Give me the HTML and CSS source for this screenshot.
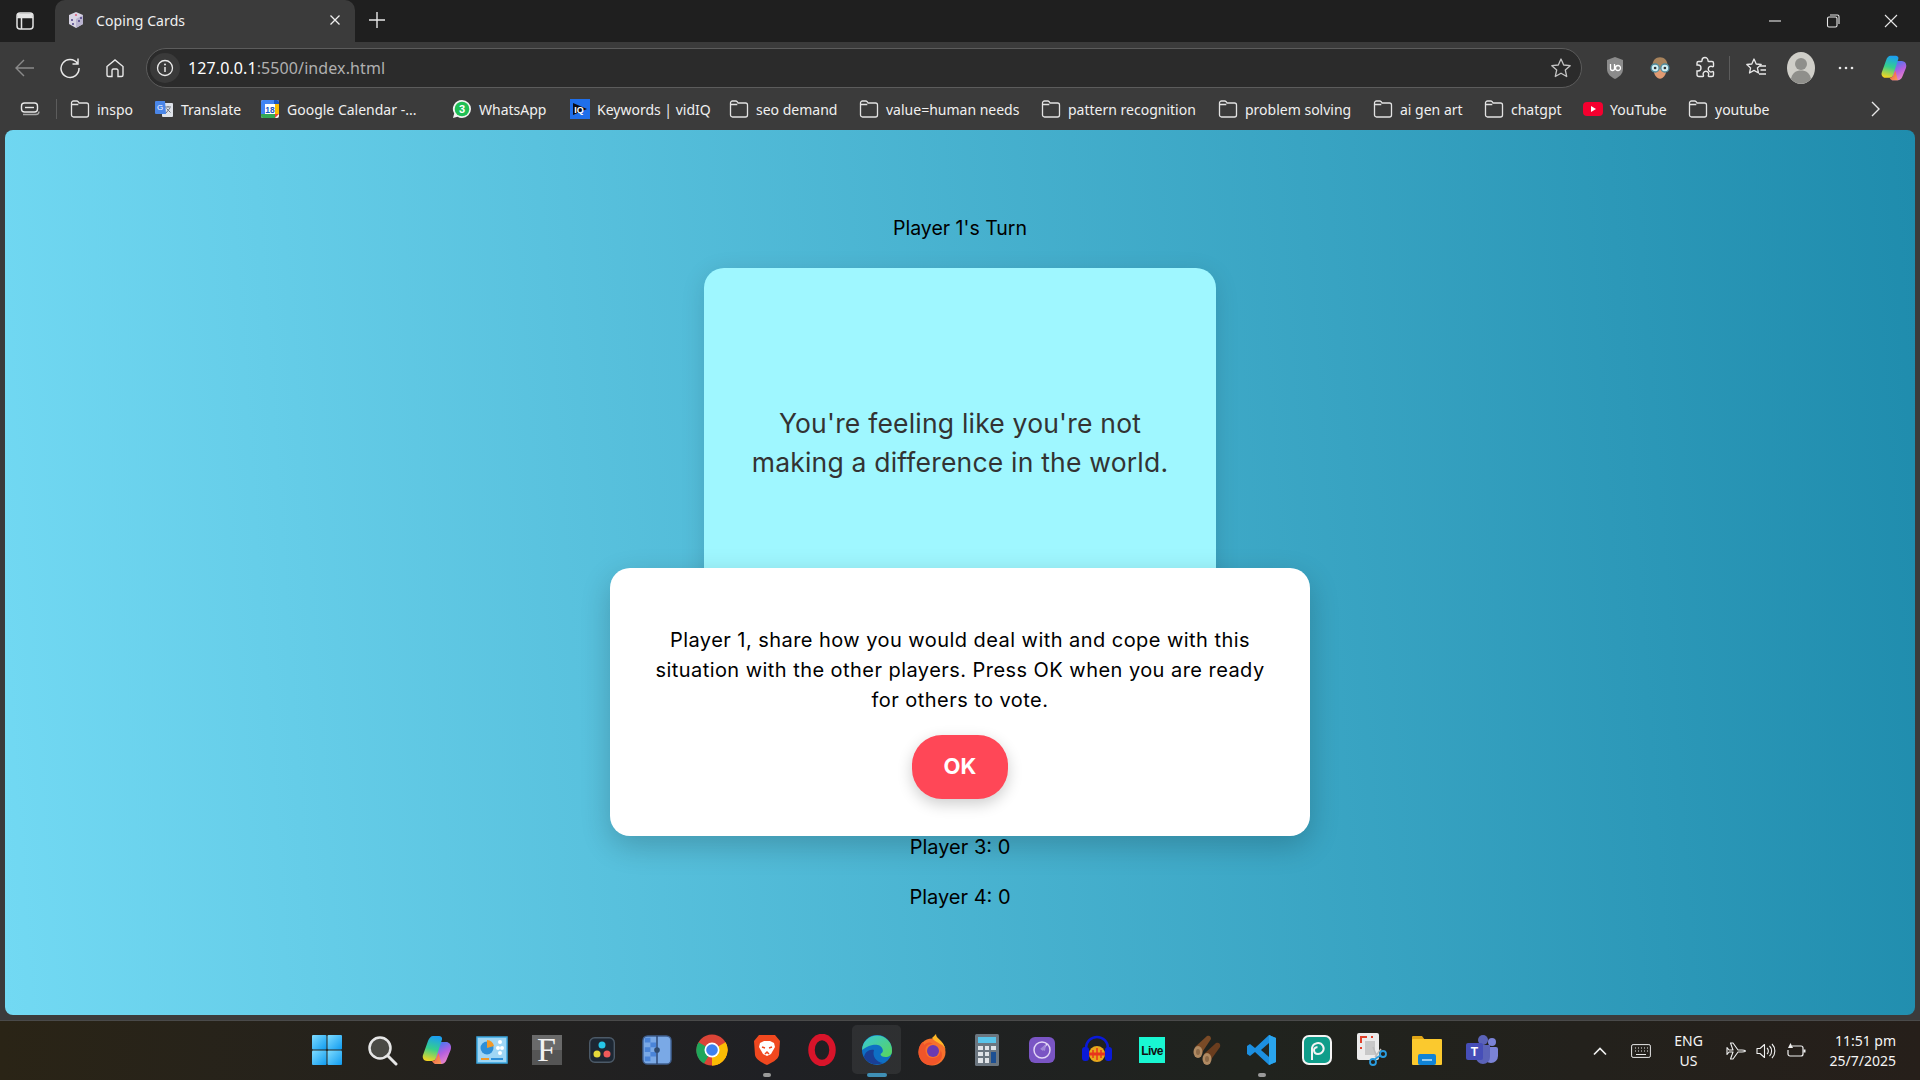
FILE: index.html
```html
<!DOCTYPE html>
<html lang="en">
<head>
  <meta charset="UTF-8">
  <title>Coping Cards</title>
  <link rel="stylesheet" href="styles.css">
</head>
<body>
  <svg class="defs" width="0" height="0">
    <symbol id="folder" viewBox="0 0 20 20">
      <path d="M1.500 4a2 2 0 0 1 2-2h3.200c.6 0 1.100.3 1.500.7l.9 1.300h7.400a2 2 0 0 1 2 2v10a2 2 0 0 1-2 2h-13a2 2 0 0 1-2-2z M1.500 5.500h6.800" fill="none" stroke="#e2e2e2" stroke-width="1.300"/>
    </symbol>
  </svg>

  <div class="tabbar">
    <svg class="tabs-btn" width="18" height="18" viewBox="0 0 18 18"><rect x="1" y="1" width="16" height="16" rx="3" fill="none" stroke="#e4e4e4" stroke-width="1.500"/><path d="M1 5.500h16M5.500 5.500V17" stroke="#e4e4e4" stroke-width="1.500" fill="none"/><rect x="1.500" y="1.500" width="15" height="3.500" fill="#e4e4e4"/></svg>
    <div class="tab">
      <svg width="18" height="18" viewBox="0 0 18 18"><path d="M9 1l7 3v9l-7 4-7-4V4z" fill="#d8d4e4"/><path d="M9 8l7-4v9l-7 4z" fill="#b9b3cf"/><circle cx="9" cy="4" r="1.100" fill="#e0607a"/><circle cx="5" cy="9" r="1" fill="#4d3f86"/><circle cx="6" cy="13" r="1" fill="#4d3f86"/><circle cx="12" cy="10" r="1" fill="#4d3f86"/><circle cx="14" cy="7" r="1" fill="#4d3f86"/></svg>
      <span class="tab-title">Coping Cards</span>
      <svg class="tab-close" width="12" height="12" viewBox="0 0 12 12"><path d="M1.500 1.500l9 9M10.500 1.500l-9 9" stroke="#f0f0f0" stroke-width="1.300"/></svg>
    </div>
    <svg class="tab-new" width="18" height="18" viewBox="0 0 18 18"><path d="M9 1v16M1 9h16" stroke="#e8e8e8" stroke-width="1.400"/></svg>
    <div class="win-btns">
      <svg width="14" height="14" viewBox="0 0 14 14"><path d="M1 7h12" stroke="#e8e8e8" stroke-width="1.100"/></svg>
      <svg width="14" height="14" viewBox="0 0 14 14"><rect x="1.500" y="3" width="9.500" height="10" rx="1.500" fill="none" stroke="#e8e8e8" stroke-width="1.100"/><path d="M4 1h7.500A1.500 1.500 0 0 1 13 2.500V10" fill="none" stroke="#e8e8e8" stroke-width="1.100"/></svg>
      <svg width="14" height="14" viewBox="0 0 14 14"><path d="M1 1l12 12M13 1L1 13" stroke="#e8e8e8" stroke-width="1.100"/></svg>
    </div>
  </div>

  <div class="toolbar">
    <div class="nav-btns">
      <svg width="22" height="22" viewBox="0 0 22 22"><path d="M20 11H2M10 3l-8 8 8 8" fill="none" stroke="#8a8a8a" stroke-width="1.400"/></svg>
      <svg width="22" height="22" viewBox="0 0 22 22"><path d="M18.500 6.500A9 9 0 1 0 20 11M19 1.500v5.500h-5.500" fill="none" stroke="#e8e8e8" stroke-width="1.500"/></svg>
      <svg width="22" height="22" viewBox="0 0 22 22"><path d="M3 9.500L11 3l8 6.500V18a1.500 1.500 0 0 1-1.500 1.500H14V13.500a1.500 1.500 0 0 0-1.500-1.500h-3A1.500 1.500 0 0 0 8 13.500v6H4.500A1.500 1.500 0 0 1 3 18z" fill="none" stroke="#e8e8e8" stroke-width="1.400"/></svg>
    </div>
    <div class="address">
      <span class="info-badge">
        <svg width="18" height="18" viewBox="0 0 18 18"><circle cx="9" cy="9" r="7.500" fill="none" stroke="#e8e8e8" stroke-width="1.300"/><path d="M9 8v5" stroke="#e8e8e8" stroke-width="1.500"/><circle cx="9" cy="5.500" r="1" fill="#e8e8e8"/></svg>
      </span>
      <span class="url"><span class="url-host">127.0.0.1</span>:5500/index.html</span>
      <svg class="star" width="22" height="22" viewBox="0 0 22 22"><path d="M11 2l2.700 6 6.500.7-4.900 4.300 1.400 6.500L11 16.200 5.300 19.500l1.400-6.500L1.800 8.700 8.300 8z" fill="none" stroke="#c4c4c4" stroke-width="1.300" stroke-linejoin="round"/></svg>
    </div>
    <div class="ext-btns">
      <svg class="ext" width="20" height="24" viewBox="0 0 20 24"><path d="M10 1l8 3v9c0 5-4 8-8 10-4-2-8-5-8-10V4z" fill="#8b8b8b"/><path d="M5.500 8v4.500a2 2 0 0 0 4 0V8M10.500 12a2.500 2.500 0 1 0 5 0 2.500 2.500 0 1 0-5 0" fill="none" stroke="#fff" stroke-width="1.300"/></svg>
      <svg class="ext" width="24" height="26" viewBox="0 0 22 24"><path d="M4 10c0-5 3-8 7-8s7 3 7 8v3H4z" fill="#a8835c"/><path d="M5 13c0 5 3 9 6 9s6-4 6-9z" fill="#e09a72"/><circle cx="6.500" cy="12" r="3.700" fill="#cfeef2" stroke="#4d8a9c" stroke-width="1.200"/><circle cx="15.500" cy="12" r="3.700" fill="#cfeef2" stroke="#4d8a9c" stroke-width="1.200"/><circle cx="6.500" cy="12" r="1.200" fill="#333"/><circle cx="15.500" cy="12" r="1.200" fill="#333"/></svg>
      <svg class="ext" width="22" height="24" viewBox="0 0 22 24"><path d="M8 4.500a3 3 0 0 1 6 0c0 .5 0 1 .5 1H18a1.500 1.500 0 0 1 1.500 1.500v3c0 .6-.6.8-1.200.6a2.800 2.800 0 1 0 0 5c.6-.2 1.200 0 1.200.6V19a1.500 1.500 0 0 1-1.500 1.500h-3c-.6 0-.8-.6-.6-1.200a2.800 2.800 0 1 0-5 0c.2.600 0 1.200-.6 1.200H5a2 2 0 0 1-2-2v-3.500h1a3 3 0 0 0 0-6H3V7a1.500 1.500 0 0 1 1.500-1.500h3C8 5.500 8 5 8 4.500z" fill="none" stroke="#e8e8e8" stroke-width="1.400"/></svg>
      <span class="ext-sep"></span>
      <svg class="ext" width="22" height="22" viewBox="0 0 22 22"><path d="M9 2l2.200 5 5 .5-3.800 3.400 1.100 5.100L9 13.400 4.500 16l1.100-5.100L1.800 7.500l5-.5z" fill="none" stroke="#e8e8e8" stroke-width="1.300" stroke-linejoin="round"/><path d="M15 9h6M15.500 13h5.500M14 17h7" stroke="#e8e8e8" stroke-width="1.300"/></svg>
      <svg class="ext" width="28" height="32" viewBox="0 0 28 32"><ellipse cx="14" cy="16" rx="14" ry="16" fill="#cfcec8"/><circle cx="14" cy="12" r="6" fill="#8f8f8b"/><path d="M4 27c1-6 5-8.500 10-8.500s9 2.500 10 8.500a14 16 0 0 1-20 0z" fill="#8f8f8b"/></svg>
      <svg class="ext" width="18" height="6" viewBox="0 0 18 6"><circle cx="3" cy="3" r="1.300" fill="#e8e8e8"/><circle cx="9" cy="3" r="1.300" fill="#e8e8e8"/><circle cx="15" cy="3" r="1.300" fill="#e8e8e8"/></svg>
      <svg class="ext" width="28" height="32" viewBox="0 0 32 32"><use href="#copilot-mark"/></svg>
    </div>
  </div>

  <div class="bookmarks">
    <svg class="bm-pill" width="20" height="16" viewBox="0 0 20 16"><rect x="1.500" y="2" width="16" height="9" rx="3" fill="none" stroke="#e8e8e8" stroke-width="1.400"/><path d="M5 6.500h9" stroke="#e8e8e8" stroke-width="1.400"/><path d="M3 13.500h13a3 3 0 0 0 3-3" fill="none" stroke="#a8a8a8" stroke-width="1.300"/></svg>
    <span class="bm-sep"></span>
    <span class="bm"><svg width="20" height="20"><use href="#folder"/></svg>inspo</span>
    <span class="bm"><svg width="20" height="20" viewBox="0 0 20 20"><rect x="8" y="4" width="11" height="14" rx="1" fill="#dfe3ea"/><path d="M11 8h6M14 7v1M12 14l4-5M12.500 9.500l4 4" stroke="#6c7480" stroke-width="1"/><path d="M2 2h9l1 13H2a1 1 0 0 1-1-1V3a1 1 0 0 1 1-1z" fill="#4a86e8"/><text class="icon-text" x="6" y="11" font-size="8" fill="#fff" text-anchor="middle">G</text></svg>Translate</span>
    <span class="bm"><svg width="20" height="20" viewBox="0 0 20 20"><rect x="1" y="1" width="18" height="18" rx="2" fill="#fff"/><path d="M1 5V3a2 2 0 0 1 2-2h11v4z" fill="#4285f4"/><path d="M14 1h3a2 2 0 0 1 2 2v2h-5z" fill="#1a56c4"/><path d="M1 5h4v10H1z" fill="#4285f4"/><path d="M15 5h4v10h-4z" fill="#fbbc04"/><path d="M1 15h14v4H3a2 2 0 0 1-2-2z" fill="#34a853"/><path d="M15 15h4l-4 4z" fill="#ea4335"/><text class="icon-text" x="10" y="13.500" font-size="8.500" font-weight="700" fill="#1a56c4" text-anchor="middle">18</text></svg>Google Calendar -...</span>
    <span class="bm"><svg width="20" height="20" viewBox="0 0 20 20"><path d="M10 1a9 9 0 0 1 0 18 9 9 0 0 1-4.500-1.200L1 19l1.200-4.400A9 9 0 0 1 10 1z" fill="#f2f2f2"/><circle cx="10" cy="10" r="7.300" fill="#1fbf55"/><text class="icon-text" x="10" y="14" font-size="11" font-weight="700" fill="#fff" text-anchor="middle">3</text></svg>WhatsApp</span>
    <span class="bm"><svg width="20" height="20" viewBox="0 0 20 20"><rect width="20" height="20" fill="#1f6feb"/><path d="M3 4l14 6-14 6z" fill="#0b0b14"/><text class="icon-text" x="9" y="13.500" font-size="9" font-weight="700" fill="#fff" text-anchor="middle">IQ</text></svg>Keywords | vidIQ</span>
    <span class="bm"><svg width="20" height="20"><use href="#folder"/></svg>seo demand</span>
    <span class="bm"><svg width="20" height="20"><use href="#folder"/></svg>value=human needs</span>
    <span class="bm"><svg width="20" height="20"><use href="#folder"/></svg>pattern recognition</span>
    <span class="bm"><svg width="20" height="20"><use href="#folder"/></svg>problem solving</span>
    <span class="bm"><svg width="20" height="20"><use href="#folder"/></svg>ai gen art</span>
    <span class="bm"><svg width="20" height="20"><use href="#folder"/></svg>chatgpt</span>
    <span class="bm"><svg width="20" height="20" viewBox="0 0 20 20"><rect y="3" width="20" height="14" rx="4" fill="#f5002f"/><path d="M8 7l5 3-5 3z" fill="#fff"/></svg>YouTube</span>
    <span class="bm"><svg width="20" height="20"><use href="#folder"/></svg>youtube</span>
    <svg class="bm-more" width="12" height="18" viewBox="0 0 12 18"><path d="M3 2l7 7-7 7" fill="none" stroke="#e8e8e8" stroke-width="1.400"/></svg>
  </div>

  <main class="page">
    <h2 class="turn">Player 1's Turn</h2>
    <div class="card">
      <p>You're feeling like you're not making a difference in the world.</p>
    </div>
    <div class="scores">
      <p>Player 3: 0</p>
      <p>Player 4: 0</p>
    </div>

    <div class="modal">
      <p>Player 1, share how you would deal with and cope with this situation with the other players. Press OK when you are ready for others to vote.</p>
      <button class="ok-btn" type="button">OK</button>
    </div>
  </main>

  <div class="taskbar">
    <div class="tb-icons">
      <span class="tb-slot"><svg width="32" height="32" viewBox="0 0 32 32"><defs><linearGradient id="win" x1="0" y1="0" x2="1" y2="1"><stop offset="0" stop-color="#7fdcff"/><stop offset="1" stop-color="#0f9bf0"/></linearGradient></defs><rect x="1" y="1" width="14.500" height="14.500" rx="1" fill="url(#win)"/><rect x="16.500" y="1" width="14.500" height="14.500" rx="1" fill="url(#win)"/><rect x="1" y="16.500" width="14.500" height="14.500" rx="1" fill="url(#win)"/><rect x="16.500" y="16.500" width="14.500" height="14.500" rx="1" fill="url(#win)"/></svg></span>
      <span class="tb-slot"><svg width="32" height="32" viewBox="0 0 32 32"><circle cx="14" cy="14" r="10.500" fill="#4a4a45" stroke="#e6e6e6" stroke-width="2.500"/><path d="M22 22l8 8" stroke="#e6e6e6" stroke-width="3" stroke-linecap="round"/></svg></span>
      <span class="tb-slot"><svg width="32" height="32" viewBox="0 0 32 32"><symbol id="copilot-mark" viewBox="0 0 32 32"><defs><linearGradient id="cpA" x1="0.500" y1="0" x2="0.300" y2="1"><stop offset="0" stop-color="#1c9ff0"/><stop offset=".5" stop-color="#35cf8c"/><stop offset="1" stop-color="#f6d520"/></linearGradient><linearGradient id="cpB" x1="0.300" y1="0" x2="0.700" y2="1"><stop offset="0" stop-color="#3f7bf0"/><stop offset=".5" stop-color="#b45fe0"/><stop offset="1" stop-color="#f28ac4"/></linearGradient><linearGradient id="cpC" x1="0" y1="0" x2="1" y2="1"><stop offset="0" stop-color="#f5543a"/><stop offset="1" stop-color="#f5a05a"/></linearGradient></defs><path d="M17 8h8c3 0 5 2.500 5 5 0 1 0 2-.4 3l-4.100 10c-1 2.500-3 4-5 4h-7z" fill="url(#cpB)"/><path d="M12 2h6c2 0 3.500 1.500 3 3.500L15 24c-.6 2-2 3-4 3H6c-3 0-5-3-4-6l5-14c1-3 3-5 5-5z" fill="url(#cpA)"/><path d="M11 27c2 0 4-1 4.500-3l2-5c1 3 2 8 3 11h-5c-2 0-3.500-1-4.500-3z" fill="url(#cpC)"/></symbol><use href="#copilot-mark"/></svg></span>
      <span class="tb-slot"><svg width="32" height="32" viewBox="0 0 32 32"><rect x="1" y="3" width="30" height="26" fill="#9fd6f5" stroke="#3aa7e0" stroke-width="1.500"/><circle cx="11" cy="14" r="6.500" fill="#2d8fd8"/><path d="M11 14V6a8 8 0 0 1 7 6z" fill="#f09a2a"/><circle cx="24" cy="8" r="2" fill="#fff"/><circle cx="22" cy="14" r="2" fill="#fff"/><circle cx="26" cy="14" r="2" fill="#fff"/><circle cx="24" cy="19" r="2" fill="#fff"/><path d="M5 25h8" stroke="#f09a2a" stroke-width="2"/><path d="M15 25h12" stroke="#2d8fd8" stroke-width="2"/></svg></span>
      <span class="tb-slot"><span class="logo-f">F</span></span>
      <span class="tb-slot"><svg width="26" height="26" viewBox="0 0 26 26"><rect x=".7" y=".7" width="24.600" height="24.600" rx="5" fill="#1d2733" stroke="#4c5a68" stroke-width="1.400"/><circle cx="13" cy="8" r="3.500" fill="#25c6e8"/><circle cx="8" cy="17" r="3.500" fill="#e5d93a"/><circle cx="18" cy="17" r="3.500" fill="#ef5a5a"/></svg></span>
      <span class="tb-slot"><svg width="30" height="30" viewBox="0 0 32 32"><rect x="1" y="1" width="30" height="30" rx="5" fill="#7aa9e6" stroke="#3f5f8f" stroke-width="1.500"/><path d="M3 3h6v5H3zM9 8h6v5H9zM3 13h6v5H3zM9 18h6v5H9zM3 23h6v5H3z" fill="#4a84d8"/><path d="M16 1v30" stroke="#2c4570" stroke-width="1.500"/><circle cx="16" cy="16" r="3" fill="#2f4a6e"/></svg></span>
      <span class="tb-slot"><svg width="32" height="32" viewBox="0 0 32 32"><circle cx="16" cy="16" r="15.500" fill="#db4437"/><path d="M16 16L29.500 8.300A15.500 15.500 0 0 1 16 31.500z" fill="#fbbc04"/><path d="M16 16l-8 13.600A15.500 15.500 0 0 1 2.500 8.200z" fill="#1fa65a"/><path d="M16 31.500l7.500-13L29.500 8.300A15.500 15.500 0 0 1 16 31.500z" fill="#fbbc04"/><circle cx="16" cy="16" r="7.500" fill="#fff"/><circle cx="16" cy="16" r="5.800" fill="#3f80ee"/></svg></span>
      <span class="tb-slot tb-slot-open"><svg width="28" height="32" viewBox="0 0 28 32"><path d="M6 1h16l5 6-1 14c-1 5-8 8-12 10C10 29 3 26 2 21L1 7z" fill="#f0481f"/><path d="M7 9l4-2h6l4 2 1 4-4 7-4 2-4-2-4-7z" fill="#fff"/><path d="M9 13l3 1M19 13l-3 1M12 20l2-2 2 2" stroke="#f0481f" stroke-width="1.500" fill="none"/></svg></span>
      <span class="tb-slot"><svg width="32" height="32" viewBox="0 0 32 32"><ellipse cx="16" cy="16" rx="10.500" ry="13" fill="none" stroke="#d8142a" stroke-width="6.500"/></svg></span>
      <span class="tb-slot tb-slot-active"><svg width="32" height="34" viewBox="0 0 32 32"><defs><linearGradient id="edgeA" x1="0" y1="0" x2="1" y2="1"><stop offset="0" stop-color="#36c7d8"/><stop offset="1" stop-color="#5ad55a"/></linearGradient></defs><circle cx="16" cy="16" r="15" fill="#0e6fc4"/><path d="M1 16A15 15 0 0 1 31 17c0 4-3 6-6.500 6-3 0-5-1-5-3 2-1 3-3 2-5-1-4-6-5-10-4-5 1-9 4-10.500 5z" fill="url(#edgeA)"/><path d="M13 16c-2 6 2 12 9 13-7 3-15 1-19-6 1-5 5-8 10-7z" fill="#1a3f95"/></svg></span>
      <span class="tb-slot"><svg width="30" height="32" viewBox="0 0 30 32"><circle cx="15" cy="18" r="13.500" fill="#f7712c"/><path d="M15 4c2-2 3-3 4-4 0 3 2 4 5 7 3 3 5 8 5 11 0-4-3-7-6-8-2-2-6-3-8-6z" fill="#ffb627"/><path d="M1.500 18c0-5 2-8 4-10l2 3c3-3 5-3 8-1-4 0-7 2-7 6 0 5 3 8 7 8 5 0 8-3 8-8 2 3 2 7 0 10-3 4-7 5-10 5C6 31 1.500 25 1.500 18z" fill="#f0552a"/><circle cx="16" cy="17" r="6" fill="#6a3ab0"/></svg></span>
      <span class="tb-slot"><svg width="24" height="32" viewBox="0 0 24 32"><rect width="24" height="32" rx="1.500" fill="#6b7680"/><rect x="3" y="3" width="18" height="6" fill="#58c4ea"/><path d="M3 12h5v4H3zM10 12h4v4h-4zM3 18h5v4H3zM10 18h4v4h-4zM3 24h5v5H3zM10 24h4v5h-4z" fill="#e0e4e8"/><path d="M16 12h5v4h-5z" fill="#e0e4e8"/><path d="M16 18h5v11h-5z" fill="#1c4f92"/></svg></span>
      <span class="tb-slot"><svg width="26" height="26" viewBox="0 0 26 26"><rect width="26" height="26" rx="6" fill="#7a55c4"/><circle cx="13" cy="13" r="8" fill="none" stroke="#e2d6f6" stroke-width="1.500"/><path d="M13 13l5-6" stroke="#e2d6f6" stroke-width="1.500"/><path d="M11 12l6-5-1 7z" fill="#a088d8"/></svg></span>
      <span class="tb-slot"><svg width="32" height="32" viewBox="0 0 32 32"><path d="M5 20v-6a11 11 0 0 1 22 0v6" fill="none" stroke="#0a1ad8" stroke-width="2.500"/><rect x="1" y="13" width="7" height="14" rx="3" fill="#0a1ad8"/><rect x="24" y="13" width="7" height="14" rx="3" fill="#0a1ad8"/><ellipse cx="16" cy="20" rx="8" ry="8" fill="#e8a81c"/><path d="M8 20h16" stroke="#e8341c" stroke-width="3"/><path d="M12 16v8M16 14v12M20 16v8" stroke="#e8341c" stroke-width="1.500"/></svg></span>
      <span class="tb-slot"><svg width="26" height="26" viewBox="0 0 26 26"><rect width="26" height="26" fill="#19f7d2"/><text class="icon-narrow" x="13" y="18" font-size="12" font-weight="700" fill="#111" text-anchor="middle">Live</text></svg></span>
      <span class="tb-slot"><svg width="30" height="32" viewBox="0 0 30 32"><path d="M3 13L15 2c2-1 4 0 4 3L9 20z" fill="#7a4a26"/><path d="M12 20l12-11c3-1 5 1 4 4L18 27z" fill="#6a3d1e"/><ellipse cx="6" cy="18" rx="4.500" ry="6" fill="#b08a62"/><ellipse cx="15" cy="25" rx="4.500" ry="6" fill="#b08a62"/><ellipse cx="6" cy="18" rx="2" ry="3" fill="#8c6a48"/><ellipse cx="15" cy="25" rx="2" ry="3" fill="#8c6a48"/></svg></span>
      <span class="tb-slot tb-slot-open"><svg width="30" height="32" viewBox="0 0 30 32"><path d="M22 1l7 3v24l-7 3L8 18l-5 4-3-2v-8l3-2 5 4z" fill="#1c8fe0"/><path d="M22 1l7 3v24l-7 3z" fill="#2aa5ee"/><path d="M22 9l-8 7 8 7z" fill="#232620"/></svg></span>
      <span class="tb-slot"><svg width="30" height="30" viewBox="0 0 30 30"><rect x="1" y="1" width="28" height="28" rx="6" fill="#0f9d8a" stroke="#f4f4f4" stroke-width="2"/><path d="M10 25v-12a6 6 0 0 1 11-2c2 4-1 8-5 8-3 0-4-2-4-4s2-3 3.500-2.500" fill="none" stroke="#f4f4f4" stroke-width="2"/></svg></span>
      <span class="tb-slot"><svg width="30" height="34" viewBox="0 0 30 34"><rect width="22" height="27" rx="2" fill="#ebebeb"/><path d="M4 10V4h6M14 4h2M4 14v2" fill="none" stroke="#e0402a" stroke-width="2"/><rect x="8" y="8" width="10" height="14" fill="#c8c8c8"/><path d="M16 14l4 10M24 16l-6 8" stroke="#bbb" stroke-width="1.500"/><circle cx="16" cy="29" r="3" fill="none" stroke="#2a9de0" stroke-width="1.800"/><circle cx="26" cy="21" r="3" fill="none" stroke="#2a9de0" stroke-width="1.800"/><path d="M18 26l6-4" stroke="#2a9de0" stroke-width="1.800"/></svg></span>
      <span class="tb-slot"><svg width="30" height="30" viewBox="0 0 30 30"><path d="M0 2a1 1 0 0 1 1-1h9l3 4H0z" fill="#e0a516"/><rect y="4" width="30" height="26" rx="1" fill="#fbc92e"/><rect x="6" y="19" width="18" height="11" rx="2" fill="#1083d6"/><path d="M10 25h10" stroke="#bfe2f8" stroke-width="1.500"/></svg></span>
      <span class="tb-slot"><svg width="32" height="30" viewBox="0 0 32 30"><circle cx="26" cy="7" r="4" fill="#7b83d6"/><path d="M16 12h14a2 2 0 0 1 2 2v7a7 7 0 0 1-14 0z" fill="#7b83d6"/><circle cx="17" cy="5" r="5" fill="#5b63b8"/><path d="M10 10h14v12a7 7 0 0 1-14 0z" fill="#5b63b8"/><rect y="8" width="17" height="17" rx="2" fill="#464eb8"/><text class="icon-text" x="8.500" y="21" font-size="12" font-weight="700" fill="#fff" text-anchor="middle">T</text></svg></span>
    </div>
    <div class="tray">
      <svg class="tray-chevron" width="14" height="10" viewBox="0 0 14 10"><path d="M1 8.500L7 2.500 13 8.500" fill="none" stroke="#f0f0f0" stroke-width="1.700"/></svg>
      <svg class="tray-kbd" width="20" height="14" viewBox="0 0 20 14"><rect x=".6" y=".6" width="18.800" height="12.800" rx="1.500" fill="none" stroke="#e8e8e8" stroke-width="1"/><path d="M4 4h1M7 4h1M10 4h1M13 4h1M16 4h1M4 7h1M7 7h1M10 7h1M13 7h1M16 7h1M5 10.500h10" stroke="#e8e8e8" stroke-width="1"/></svg>
      <div class="tray-lang">ENG<br>US</div>
      <div class="tray-status">
        <svg width="20" height="20" viewBox="0 0 20 20"><path d="M1 6.500l2 2.500h4L4.500 2h2.500L12 9h4c2.500 0 3.500 1 3.500 1s-1 1-3.500 1h-4L7 18H4.500L7 11H3l-2 2.500z" fill="none" stroke="#f0f0f0" stroke-width="1.100" stroke-linejoin="round"/></svg>
        <svg width="20" height="20" viewBox="0 0 20 20"><path d="M1 7.500h3l4.500-4v13L4 12.500H1z" fill="none" stroke="#f0f0f0" stroke-width="1.100" stroke-linejoin="round"/><path d="M11 7a4 4 0 0 1 0 6M13.500 5a7 7 0 0 1 0 10M16 3a10 10 0 0 1 0 14" fill="none" stroke="#f0f0f0" stroke-width="1.100"/></svg>
        <svg width="20" height="20" viewBox="0 0 20 20"><path d="M6 5h9a2 2 0 0 1 2 2v6a2 2 0 0 1-2 2H4a2 2 0 0 1-2-2V9" fill="none" stroke="#f0f0f0" stroke-width="1.200"/><rect x="17.500" y="8.500" width="2" height="3" fill="#f0f0f0"/><path d="M4.500 2L2 7h5z" fill="#f0f0f0"/></svg>
      </div>
      <div class="tray-clock">11:51 pm<br>25/7/2025</div>
    </div>
  </div>
</body>
</html>
```

FILE: styles.css
```css
* {
  box-sizing: border-box;
}

html,
body {
  height: 100%;
}

body {
  margin: 0;
  display: flex;
  flex-direction: column;
  height: 1080px;
  overflow: hidden;
  background: #3b3b3b;
  font-family: "Noto Sans", "Open Sans", sans-serif;
  color: #f0f0f0;
}

.defs {
  position: absolute;
}

.icon-text {
  font-family: "Liberation Sans", sans-serif;
}

.icon-narrow {
  font-family: "Liberation Sans", sans-serif;
  letter-spacing: -0.6px;
}

.logo-f {
  display: block;
  width: 30px;
  height: 30px;
  background: linear-gradient(#6a6a6a 50%, #555 50%);
  font-family: "Liberation Serif", serif;
  font-size: 34px;
  line-height: 30px;
  text-align: center;
  color: #f2f2f2;
}

/* browser chrome */
.tabbar {
  display: flex;
  align-items: center;
  height: 42px;
  flex: none;
  background: #1f1f1f;
  padding-left: 16px;
}

.tab {
  display: flex;
  align-items: center;
  gap: 11px;
  width: 300px;
  height: 42px;
  margin-left: 21px;
  padding: 0 14px 2px 12px;
  background: #3b3b3b;
  border-radius: 10px 10px 0 0;
}

.tab-title {
  flex: 1;
  font-size: 14px;
  letter-spacing: 0.1px;
}

.tab-new {
  margin-left: 13px;
  margin-bottom: 2px;
}

.win-btns {
  display: flex;
  gap: 44px;
  margin-left: auto;
  padding-right: 22px;
}

.toolbar {
  display: flex;
  align-items: center;
  height: 46px;
  flex: none;
  padding-top: 6px;
  padding-left: 14px;
}

.nav-btns {
  display: flex;
  align-items: center;
  gap: 23px;
  width: 132px;
}

.address {
  display: flex;
  align-items: center;
  width: 1436px;
  height: 40px;
  padding: 0 9px 0 3px;
  background: #2b2b2b;
  border: 1px solid #5c5c5c;
  border-radius: 20px;
}

.info-badge {
  display: flex;
  align-items: center;
  justify-content: center;
  width: 30px;
  height: 30px;
  background: #3a3a3a;
  border-radius: 50%;
}

.url {
  margin-left: 8px;
  font-size: 16px;
  letter-spacing: 0.1px;
  color: #b0b0b0;
}

.url-host {
  color: #fff;
}

.star {
  margin-left: auto;
}

.ext-btns {
  display: grid;
  grid-template-columns: 45px 45px 45px 5px 47px 43px 47px 49px;
  justify-items: center;
  align-items: center;
  margin-left: 10px;
}

.ext-sep {
  width: 1px;
  height: 24px;
  background: #5c5c5c;
}

.bookmarks {
  display: grid;
  grid-template-columns: 30px 20px 84px 106px 192px 118px 159px 130px 182px 177px 155px 111px 99px 105px 181px 12px;
  align-items: center;
  height: 42px;
  flex: none;
  padding-left: 20px;
  font-size: 14px;
}

.bm-sep {
  justify-self: start;
  width: 1px;
  height: 20px;
  margin-left: 6px;
  background: #5c5c5c;
}

.bm {
  display: flex;
  align-items: center;
  gap: 7px;
  white-space: nowrap;
}

.bm svg {
  flex: none;
}

/* game page */
.page {
  position: relative;
  flex: 1;
  display: flex;
  flex-direction: column;
  align-items: center;
  margin: 0 5px;
  padding-top: 83px;
  background: linear-gradient(86deg, #72d9f3, #1f8cad);
  border-radius: 8px;
  font-family: Inter, "Noto Sans", sans-serif;
  color: #000;
}

.turn {
  margin: 0 0 25px;
  font-size: 19.500px;
  font-weight: 400;
  line-height: 30px;
}

.card {
  display: flex;
  align-items: center;
  justify-content: center;
  width: 512px;
  height: 348px;
  padding: 42px 40px 40px;
  background: #9ff7ff;
  border-radius: 20px;
  box-shadow: 0 5px 25px rgba(0, 0, 0, 0.12);
  text-align: center;
}

.card p {
  margin: 0;
  font-size: 26.500px;
  letter-spacing: 0.2px;
  line-height: 39px;
  color: #333;
}

.scores {
  display: flex;
  flex-direction: column;
  gap: 20px;
  margin-top: 216px;
  text-align: center;
}

.scores p {
  margin: 0;
  font-size: 20px;
  line-height: 30px;
}

.modal {
  position: absolute;
  top: 438px;
  left: 50%;
  width: 700px;
  height: 268px;
  margin-left: -350px;
  padding: 57px 40px 37px;
  background: #fff;
  border-radius: 20px;
  box-shadow: 0 10px 30px rgba(0, 0, 0, 0.2);
  text-align: center;
}

.modal p {
  margin: 0 0 20px;
  font-size: 20px;
  letter-spacing: 0.45px;
  line-height: 30px;
}

.ok-btn {
  width: 96px;
  height: 64px;
  padding: 0 0 2px;
  background: #ff4757;
  border: 0;
  border-radius: 30px;
  box-shadow: 0 5px 15px rgba(0, 0, 0, 0.2);
  font-family: inherit;
  font-size: 22px;
  font-weight: 700;
  color: #fff;
}

/* windows taskbar */
.taskbar {
  display: flex;
  align-items: center;
  flex: none;
  height: 60px;
  margin-top: 5px;
  padding-left: 299px;
  background: linear-gradient(90deg, #2a2416, #1f2024 40%, #20231e 65%, #261f1a);
  border-top: 1px solid #4a4a4a;
}

.tb-icons {
  display: flex;
}

.tb-slot {
  position: relative;
  display: flex;
  align-items: center;
  justify-content: center;
  width: 55px;
  height: 59px;
  padding-bottom: 2px;
}

.tb-slot-active::before {
  content: "";
  position: absolute;
  top: 4px;
  left: 3px;
  width: 49px;
  height: 49px;
  background: rgba(255, 255, 255, 0.07);
  border-radius: 5px;
}

.tb-slot-active svg {
  position: relative;
}

.tb-slot-active::after,
.tb-slot-open::after {
  content: "";
  position: absolute;
  bottom: 3px;
  left: 50%;
  width: 8px;
  height: 4px;
  margin-left: -4px;
  background: #9a9a9a;
  border-radius: 2px;
}

.tb-slot-active::after {
  width: 20px;
  margin-left: -10px;
  background: #3f8fb5;
}

.tray {
  display: flex;
  align-items: center;
  margin-left: auto;
  padding-right: 24px;
  font-size: 14px;
  line-height: 20px;
  color: #f5f5f5;
}

.tray-kbd {
  margin-left: 24px;
}

.tray-lang {
  width: 50px;
  margin-left: 13px;
  text-align: center;
}

.tray-status {
  display: flex;
  gap: 10px;
  margin-left: 12px;
}

.tray-clock {
  margin-left: 24px;
  text-align: right;
}
```
